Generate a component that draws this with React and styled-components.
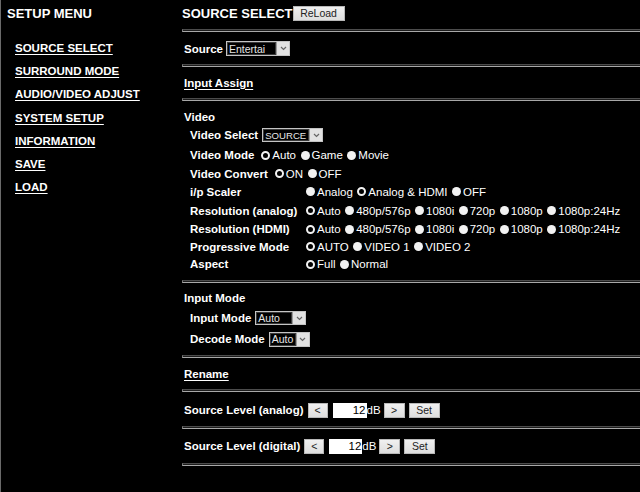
import React from 'react';
import styled, { createGlobalStyle } from 'styled-components';

const GlobalStyle = createGlobalStyle`
  html, body { margin: 0; padding: 0; background: #000; overflow: hidden; }
  body { font-family: "Liberation Sans", Arial, sans-serif; color: #fff; }
`;

const Page = styled.div`
  display: flex;
  width: 640px;
  height: 492px;
  background: #000;
`;

const Sidebar = styled.nav`
  box-sizing: border-box;
  width: 182px;
  flex: none;
  border-left: 1px solid #6a6a6a;
  padding-left: 6px;
`;

const MenuTitle = styled.div`
  margin-top: 6px;
  font-size: 13px;
  font-weight: bold;
  line-height: 16px;
`;

const MenuList = styled.div`
  margin-top: 15px;
  padding-left: 8px;
  display: flex;
  flex-direction: column;
  align-items: flex-start;
`;

const MenuLink = styled.a`
  font-size: 11.5px;
  font-weight: bold;
  line-height: 23.2px;
  color: #fff;
  text-decoration: underline;
  text-underline-offset: 2px;
`;

const Main = styled.main`
  flex: 1;
  display: flex;
  flex-direction: column;
`;

const TitleRow = styled.div`
  display: flex;
  align-items: center;
  height: 17px;
  margin: 5px 0 7px;
`;

const Title = styled.div`
  font-size: 13px;
  font-weight: bold;
`;

const Button = styled.span`
  box-sizing: border-box;
  display: inline-flex;
  align-items: center;
  justify-content: center;
  width: ${p => p.w}px;
  height: 15px;
  margin-left: ${p => p.ml || 0}px;
  margin-right: ${p => p.mr || 0}px;
  background: linear-gradient(#f0f0f0, #dedede);
  border: 1px solid #b8b8b8;
  color: #222;
  font-size: 10.5px;
  line-height: 13px;
`;

const Rule = styled.div`
  height: 1px;
  background: #1c1c1c;
  border-top: 1px solid #4c4c4c;
  border-bottom: 1px solid #a8a8a8;
  border-left: 1px solid #777;
`;

const Section = styled.section`
  padding: ${p => p.pt}px 0 ${p => p.pb}px 2px;
`;

const Heading = styled.div`
  display: flex;
  align-items: center;
  height: ${p => p.h}px;
  font-size: 11.5px;
  font-weight: bold;
`;

const LinkHeading = styled.a`
  font-size: 11.5px;
  font-weight: bold;
  color: #fff;
  text-decoration: underline;
  text-underline-offset: 2px;
`;

const Row = styled.div`
  display: flex;
  align-items: center;
  height: ${p => p.h}px;
  padding-left: ${p => (p.flush ? 0 : 6)}px;
`;

const Label = styled.span`
  flex: none;
  width: ${p => (p.w ? `${p.w}px` : 'auto')};
  margin-right: ${p => (p.w ? 0 : p.mr ?? 4)}px;
  font-size: 11.5px;
  font-weight: bold;
  white-space: nowrap;
`;

const Options = styled.span`
  display: flex;
  align-items: center;
`;

const Option = styled.span`
  display: inline-flex;
  align-items: center;
  margin-right: 1.5px;
  font-size: 11.5px;
  white-space: nowrap;
`;

const Radio = styled.span`
  box-sizing: border-box;
  width: 9px;
  height: 9px;
  margin: 0 2px 0 3px;
  border-radius: 50%;
  background: ${p => (p.checked ? '#000' : '#f2f2f2')};
  border: ${p => (p.checked ? '2px solid #f2f2f2' : 'none')};
`;

const Select = styled.span`
  box-sizing: border-box;
  display: inline-flex;
  width: ${p => p.w}px;
  height: ${p => p.h}px;
  border: 1px solid #c4c4c4;
  background: #000;
`;

const SelectText = styled.span`
  flex: 1;
  display: flex;
  align-items: center;
  padding-left: 2px;
  box-shadow: inset 0 0 0 1px #3a3a3a;
  font-size: ${p => p.fs || 10.5}px;
  color: #e6e6e6;
  overflow: hidden;
  white-space: nowrap;
`;

const SelectArrow = styled.span`
  width: 12px;
  flex: none;
  display: flex;
  align-items: center;
  justify-content: center;
  background: #e2e2e2;
  border-left: 1px solid #9a9a9a;
`;

const LevelInput = styled.span`
  box-sizing: border-box;
  display: inline-block;
  width: ${p => p.w}px;
  height: 15px;
  background: #fff;
  color: #000;
  text-align: right;
  padding-right: 1px;
  font-size: 11.5px;
  line-height: 15px;
`;

const Unit = styled.span`
  font-size: 11.5px;
`;

function Chevron() {
  return (
    <svg width="7" height="5" viewBox="0 0 7 5">
      <polyline points="1,1 3.5,3.5 6,1" fill="none" stroke="#666" strokeWidth="1.2" />
    </svg>
  );
}

function Dropdown({ w, h, value, fs }) {
  return (
    <Select w={w} h={h}>
      <SelectText fs={fs}>{value}</SelectText>
      <SelectArrow><Chevron /></SelectArrow>
    </Select>
  );
}

function Radios({ items, checked }) {
  return (
    <Options>
      {items.map((t, i) => (
        <Option key={t}>
          <Radio checked={i === checked} />
          {t}
        </Option>
      ))}
    </Options>
  );
}

const menu = ['SOURCE SELECT', 'SURROUND MODE', 'AUDIO/VIDEO ADJUST', 'SYSTEM SETUP', 'INFORMATION', 'SAVE', 'LOAD'];

const resolutions = ['Auto', '480p/576p', '1080i', '720p', '1080p', '1080p:24Hz'];

const tableRows = [
  { label: 'i/p Scaler', h: 19, items: ['Analog', 'Analog & HDMI', 'OFF'], checked: 1 },
  { label: 'Resolution (analog)', h: 19, items: resolutions, checked: 0 },
  { label: 'Resolution (HDMI)', h: 18, items: resolutions, checked: 0 },
  { label: 'Progressive Mode', h: 17, items: ['AUTO', 'VIDEO 1', 'VIDEO 2'], checked: 0 },
  { label: 'Aspect', h: 18, items: ['Full', 'Normal'], checked: 0 },
];

function LevelRow({ label, inputW, pt, pb }) {
  return (
    <Section pt={pt} pb={pb}>
      <Row h={16} flush>
        <Label mr={4}>{label}</Label>
        <Button w={20} mr={5}>&lt;</Button>
        <LevelInput w={inputW}>12</LevelInput>
        <Unit>dB</Unit>
        <Button w={21} ml={3}>&gt;</Button>
        <Button w={31} ml={4}>Set</Button>
      </Row>
    </Section>
  );
}

export default function App() {
  return (
    <Page>
      <GlobalStyle />
      <Sidebar>
        <MenuTitle>SETUP MENU</MenuTitle>
        <MenuList>
          {menu.map(m => (
            <MenuLink key={m} href="#">{m}</MenuLink>
          ))}
        </MenuList>
      </Sidebar>
      <Main>
        <TitleRow>
          <Title>SOURCE SELECT</Title>
          <Button w={52}>ReLoad</Button>
        </TitleRow>
        <Rule />
        <Section pt={9} pb={8}>
          <Row h={15} flush>
            <Label mr={3}>Source</Label>
            <Dropdown w={64} h={15} value="Entertai" />
          </Row>
        </Section>
        <Rule />
        <Section pt={8} pb={8}>
          <Heading h={15}><LinkHeading href="#">Input Assign</LinkHeading></Heading>
        </Section>
        <Rule />
        <Section pt={8} pb={7}>
          <Heading h={16}>Video</Heading>
          <Row h={20}>
            <Label>Video Select</Label>
            <Dropdown w={61} h={14} value="SOURCE" fs={9.6} />
          </Row>
          <Row h={20}>
            <Label mr={4}>Video Mode</Label>
            <Radios items={['Auto', 'Game', 'Movie']} checked={0} />
          </Row>
          <Row h={17}>
            <Label mr={4}>Video Convert</Label>
            <Radios items={['ON', 'OFF']} checked={0} />
          </Row>
          {tableRows.map(r => (
            <Row h={r.h} key={r.label}>
              <Label w={113}>{r.label}</Label>
              <Radios items={r.items} checked={r.checked} />
            </Row>
          ))}
        </Section>
        <Rule />
        <Section pt={6} pb={6}>
          <Heading h={18}>Input Mode</Heading>
          <Row h={22}>
            <Label>Input Mode</Label>
            <Dropdown w={51} h={14} value="Auto" />
          </Row>
          <Row h={20}>
            <Label>Decode Mode</Label>
            <Dropdown w={41} h={15} value="Auto" />
          </Row>
        </Section>
        <Rule />
        <Section pt={8} pb={8}>
          <Heading h={15}><LinkHeading href="#">Rename</LinkHeading></Heading>
        </Section>
        <Rule />
        <LevelRow label="Source Level (analog)" inputW={34} pt={10} pb={8} />
        <Rule />
        <LevelRow label="Source Level (digital)" inputW={33} pt={9} pb={9} />
        <Rule />
      </Main>
    </Page>
  );
}
